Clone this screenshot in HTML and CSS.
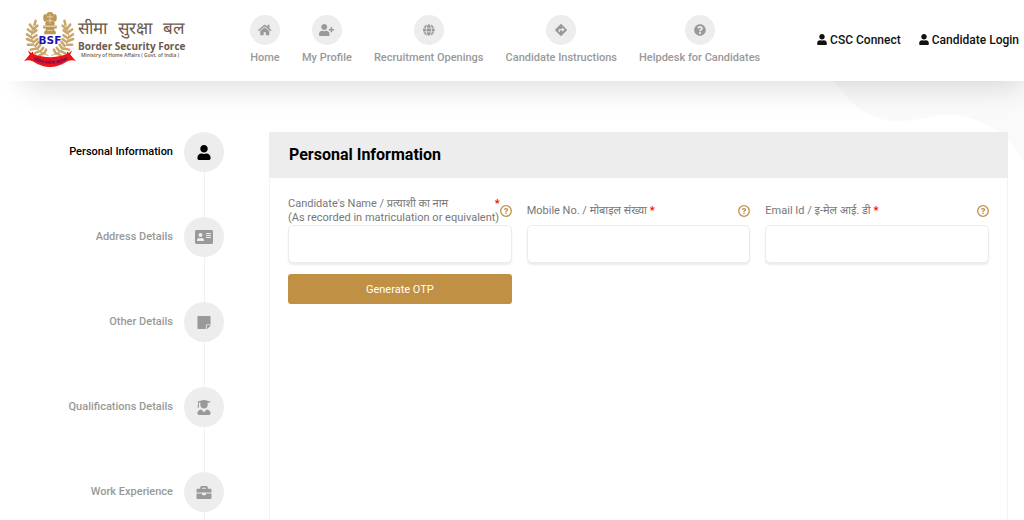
FILE: index.html
```html
<!DOCTYPE html>
<html lang="en">
<head>
    <meta charset="UTF-8">
    <meta name="viewport" content="width=device-width, initial-scale=1.0">
    <title>BSF Recruitment - Personal Information</title>
    <link rel="stylesheet" href="styles.css">
</head>
<body>
    <!-- shared icons -->
    <svg class="sprite" aria-hidden="true">
        <symbol id="user" viewBox="0 0 448 512"><path d="M224 256c70.7 0 128-57.3 128-128S294.7 0 224 0 96 57.3 96 128s57.3 128 128 128zm89.6 32h-16.7c-22.2 10.2-46.9 16-72.9 16s-50.6-5.8-72.9-16h-16.7C60.2 288 0 348.2 0 422.4V464c0 26.5 21.5 48 48 48h352c26.5 0 48-21.5 48-48v-41.6c0-74.2-60.2-134.4-134.4-134.4z"/></symbol>
        <symbol id="help" viewBox="0 0 512 512">
            <circle cx="256" cy="256" r="226" fill="none" stroke="currentColor" stroke-width="56"/>
            <path transform="translate(56 56) scale(.78)" d="M262.7 90c-54.5 0-89.3 23-116.6 63.8-3.5 5.2-2.3 12.4 2.7 16.2l34.7 26.3c5.2 4 12.6 3 16.7-2.1 17.8-22.7 30.1-35.8 57.3-35.8 20.4 0 45.7 13.1 45.7 33 0 15-12.4 22.6-32.5 33.9C247.1 238.5 216 254.9 216 296v4c0 6.6 5.4 12 12 12h56c6.6 0 12-5.4 12-12v-1.3c0-28.5 83.2-29.7 83.2-106.7 0-58-60.2-102-116.5-102zM256 338c-25.4 0-46 20.6-46 46s20.6 46 46 46 46-20.6 46-46-20.6-46-46-46z"/>
        </symbol>
    </svg>

    <header class="header">
        <a class="logo" href="#">
            <svg class="crest" viewBox="0 0 54 58" aria-hidden="true">
                <g id="branch" fill="none" stroke="#c8a66c" stroke-linecap="round">
                    <path stroke-width="1" d="M11 13C4 25 8 39 25 45"/>
                    <path stroke-width="2.6" d="M11 13L12 9M9 17L6 13M10 18L14 14M8 21L4 18M9 22L13 19M7 26L3 23M9 27L13 24M8 30L3 28M10 31L14 28M9 34L4 34M12 35L15 31M12 38L7 39M14 38L17 34M15 41L11 43M17 41L20 37M20 43L16 45M21 43L23 39"/>
                </g>
                <use href="#branch" transform="translate(54 0) scale(-1 1)"/>
                <g fill="#bd9654">
                    <path d="M23 4q0-4 4-4t4 4v6q2 2 0 4h-8q-2-2 0-4z"/>
                    <path d="M20 5q0-3 3-3v8q-3 0-3-3zM34 5q0-3-3-3v8q3 0 3-3z"/>
                    <path d="M20 14h14v3H20zM23 17h8l1 3H22zM21 20h12v3H21z"/>
                </g>
                <path d="M24 5h6M24 9h6M27 2v10M21 15h12M24 19h6" stroke="#eedfbd" stroke-width=".8"/>
                <path fill="#c40b10" d="M9 41l-5 6 7 3zM45 41l5 6-7 3z"/>
                <path fill="#ec1418" d="M4 40Q10 45 18 46Q27 48 36 46Q44 45 50 40L48 44L54 51Q50 49 45 51Q36 57 27 57T9 51Q4 49 0 51L6 44z"/>
                <path id="motto" fill="none" d="M8 49Q16 54 27 54T46 49"/>
                <text class="crest-name" x="27" y="33" text-anchor="middle">BSF</text>
                <text class="crest-motto"><textPath href="#motto" startOffset="50%" text-anchor="middle">जीवन पर्यन्त कर्तव्य</textPath></text>
            </svg>
            <span class="logo-text">
                <span class="logo-hindi" lang="hi"><span>सीमा</span> <span>सुरक्षा</span> <span>बल</span></span>
                <span class="logo-name">Border Security Force</span>
                <span class="logo-ministry">Ministry of Home Affairs ( Govt. of India )</span>
            </span>
        </a>

        <nav class="nav">
            <a href="#">
                <span class="nav-icon"><svg viewBox="0 0 576 512"><path d="M280.37 148.26L96 300.11V464a16 16 0 0 0 16 16l112.06-.29a16 16 0 0 0 15.92-16V368a16 16 0 0 1 16-16h64a16 16 0 0 1 16 16v95.64a16 16 0 0 0 16 16.05L464 480a16 16 0 0 0 16-16V300L295.67 148.26a12.19 12.19 0 0 0-15.3 0zM571.6 251.47L488 182.56V44.05a12 12 0 0 0-12-12h-56a12 12 0 0 0-12 12v72.61L318.47 43a48 48 0 0 0-61 0L4.34 251.47a12 12 0 0 0-1.6 16.9l25.5 31A12 12 0 0 0 45.15 301l235.22-193.74a12.19 12.19 0 0 1 15.3 0L530.9 301a12 12 0 0 0 16.9-1.6l25.5-31a12 12 0 0 0-1.7-16.93z"/></svg></span>
                Home
            </a>
            <a href="#">
                <span class="nav-icon"><svg viewBox="0 0 640 512"><path d="M624 208h-64v-64c0-8.8-7.2-16-16-16h-32c-8.8 0-16 7.2-16 16v64h-64c-8.8 0-16 7.2-16 16v32c0 8.8 7.2 16 16 16h64v64c0 8.8 7.2 16 16 16h32c8.8 0 16-7.2 16-16v-64h64c8.8 0 16-7.2 16-16v-32c0-8.8-7.2-16-16-16zm-400 48c70.7 0 128-57.3 128-128S294.7 0 224 0 96 57.3 96 128s57.3 128 128 128zm89.6 32h-16.7c-22.2 10.2-46.9 16-72.9 16s-50.6-5.8-72.9-16h-16.7C60.2 288 0 348.2 0 422.4V464c0 26.5 21.5 48 48 48h352c26.5 0 48-21.5 48-48v-41.6c0-74.2-60.2-134.4-134.4-134.4z"/></svg></span>
                My Profile
            </a>
            <a href="#">
                <span class="nav-icon"><svg viewBox="0 0 496 512"><path d="M336.5 160C322 70.7 287.8 8 248 8s-74 62.7-88.5 152h177zM152 256c0 22.2 1.2 43.5 3.3 64h185.3c2.1-20.5 3.3-41.8 3.3-64s-1.2-43.5-3.3-64H155.3c-2.1 20.5-3.3 41.8-3.3 64zm324.7-96c-28.6-67.9-86.5-120.4-158-141.6 24.4 33.8 41.2 84.7 50 141.6h108zM177.2 18.4C105.8 39.6 47.8 92.1 19.3 160h108c8.7-56.9 25.5-107.8 49.9-141.6zM487.4 192H372.7c2.1 21 3.3 42.5 3.3 64s-1.2 43-3.3 64h114.6c5.5-20.5 8.6-41.8 8.6-64s-3.1-43.5-8.5-64zM120 256c0-21.5 1.2-43 3.3-64H8.6C3.2 212.5 0 233.8 0 256s3.2 43.5 8.6 64h114.6c-2-21-3.2-42.5-3.2-64zm39.5 96c14.5 89.3 48.7 152 88.5 152s74-62.7 88.5-152h-177zm159.3 141.6c71.4-21.2 129.4-73.7 158-141.6h-108c-8.8 56.9-25.6 107.8-50 141.6zM19.3 352c28.6 67.9 86.5 120.4 158 141.6-24.4-33.8-41.2-84.7-50-141.6h-108z"/></svg></span>
                Recruitment Openings
            </a>
            <a href="#">
                <span class="nav-icon"><svg viewBox="0 0 512 512"><path d="M502.61 233.32L278.68 9.39c-12.52-12.52-32.83-12.52-45.36 0L9.39 233.32c-12.52 12.53-12.52 32.83 0 45.36l223.93 223.93c12.52 12.53 32.83 12.53 45.36 0l223.93-223.93c12.52-12.53 12.52-32.83 0-45.36zm-100.98 12.56l-84.21 77.73c-5.12 4.73-13.43 1.1-13.43-5.88V264h-96v64c0 4.42-3.58 8-8 8h-32c-4.42 0-8-3.58-8-8v-80c0-17.67 14.33-32 32-32h112v-53.73c0-6.97 8.3-10.61 13.43-5.88l84.21 77.73c3.43 3.17 3.43 8.59 0 11.76z"/></svg></span>
                Candidate Instructions
            </a>
            <a href="#">
                <span class="nav-icon"><svg viewBox="0 0 512 512"><path d="M504 256c0 137-111 248-248 248S8 393 8 256C8 119 119 8 256 8s248 111 248 248zM262.7 90c-54.5 0-89.3 23-116.6 63.8-3.5 5.2-2.3 12.4 2.7 16.2l34.7 26.3c5.2 4 12.6 3 16.7-2.1 17.8-22.7 30.1-35.8 57.3-35.8 20.4 0 45.7 13.1 45.7 33 0 15-12.4 22.6-32.5 33.9C247.1 238.5 216 254.9 216 296v4c0 6.6 5.4 12 12 12h56c6.6 0 12-5.4 12-12v-1.3c0-28.5 83.2-29.7 83.2-106.7 0-58-60.2-102-116.5-102zM256 338c-25.4 0-46 20.6-46 46s20.6 46 46 46 46-20.6 46-46-20.6-46-46-46z" fill-rule="evenodd"/></svg></span>
                Helpdesk for Candidates
            </a>
        </nav>

        <div class="account">
            <a href="#"><svg><use href="#user"/></svg>CSC Connect</a>
            <a href="#"><svg><use href="#user"/></svg>Candidate Login</a>
        </div>
    </header>

    <main class="main">
        <svg class="wave" viewBox="0 0 190 90" aria-hidden="true"><path d="M0 0C14 20 32 40 64 40C88 40 96 33 118 34C150 36 178 56 190 82V0z"/></svg>

        <ol class="steps">
            <li class="active">
                <a href="#">Personal Information</a>
                <span class="step-icon"><svg><use href="#user"/></svg></span>
            </li>
            <li>
                <a href="#">Address Details</a>
                <span class="step-icon"><svg class="wide" viewBox="0 0 576 512"><path fill-rule="evenodd" d="M528 32H48C22 32 0 54 0 80v352c0 26 22 48 48 48h480c26 0 48-22 48-48V80c0-26-22-48-48-48zM176 128a64 64 0 1 1 0 128a64 64 0 0 1 0-128zM64 364c0-50 34-82 67-76 30 12 60 12 90 0 33-6 67 26 67 76 0 12-9 20-22 20H86c-13 0-22-8-22-20zM352 128h152q8 0 8 8v16q0 8-8 8H352zM352 192h152q8 0 8 8v16q0 8-8 8H352zM352 256h152q8 0 8 8v16q0 8-8 8H352z"/></svg></span>
            </li>
            <li>
                <a href="#">Other Details</a>
                <span class="step-icon"><svg viewBox="0 0 448 512"><path d="M312 320h136V56c0-13.3-10.7-24-24-24H24C10.7 32 0 42.7 0 56v400c0 13.3 10.7 24 24 24h264V344c0-13.2 10.8-24 24-24zm129 55l-98 98c-4.5 4.5-10.6 7-17 7h-6V352h128v6.1c0 6.3-2.5 12.4-7 16.9z"/></svg></span>
            </li>
            <li>
                <a href="#">Qualifications Details</a>
                <span class="step-icon"><svg viewBox="0 0 448 512"><path d="M319.4 320.6L224 416l-95.4-95.4C57.1 323.7 0 382.2 0 454.4v9.6c0 26.5 21.5 48 48 48h352c26.5 0 48-21.5 48-48v-9.6c0-72.2-57.1-130.7-128.6-133.8zM13.6 79.8l6.4 1.5v58.4c-7 4.2-12 11.5-12 20.3 0 8.4 4.6 15.4 11.1 19.7L3.5 242c-1.7 6.9 2.1 14 7.6 14h41.8c5.5 0 9.3-7.1 7.6-14l-15.6-62.3C51.4 175.4 56 168.4 56 160c0-8.8-5-16.1-12-20.3V87.1l66 15.9c-8.6 17.2-14 36.4-14 57 0 70.7 57.3 128 128 128s128-57.3 128-128c0-20.6-5.3-39.8-14-57l96.3-23.2c18.2-4.4 18.2-27.1 0-31.5l-190.4-46c-13-3.1-26.7-3.1-39.7 0L13.6 48.2c-18.1 4.4-18.1 27.2 0 31.6z"/></svg></span>
            </li>
            <li>
                <a href="#">Work Experience</a>
                <span class="step-icon"><svg viewBox="0 0 512 512"><path d="M320 336c0 8.84-7.16 16-16 16h-96c-8.84 0-16-7.16-16-16v-48H0v144c0 25.6 22.4 48 48 48h416c25.6 0 48-22.4 48-48V288H320v48zm144-208h-80V80c0-25.6-22.4-48-48-48H176c-25.6 0-48 22.4-48 48v48H48c-25.6 0-48 22.4-48 48v80h512v-80c0-25.6-22.4-48-48-48zm-144 0H192V96h128v32z"/></svg></span>
            </li>
        </ol>

        <section class="panel">
            <h1>Personal Information</h1>
            <form class="form">
                <div class="field">
                    <div class="field-head">
                        <label for="name">
                            <span class="first-line"><span>Candidate's Name / <span lang="hi">प्रत्याशी का नाम</span></span> <b>*</b></span>
                            (As recorded in matriculation or equivalent)
                        </label>
                        <button class="help" type="button" aria-label="Help: name"><svg><use href="#help"/></svg></button>
                    </div>
                    <input type="text" id="name" required>
                </div>
                <div class="field">
                    <div class="field-head">
                        <label for="mobile">Mobile No. / <span lang="hi">मोबाइल संख्या</span> <b>*</b></label>
                        <button class="help" type="button" aria-label="Help: mobile"><svg><use href="#help"/></svg></button>
                    </div>
                    <input type="tel" id="mobile" required>
                </div>
                <div class="field">
                    <div class="field-head">
                        <label for="email">Email Id / <span lang="hi">इ-मेल आई. डी</span> <b>*</b></label>
                        <button class="help" type="button" aria-label="Help: email"><svg><use href="#help"/></svg></button>
                    </div>
                    <input type="email" id="email" required>
                </div>
                <button class="otp" type="button">Generate OTP</button>
            </form>
        </section>
    </main>
</body>
</html>
```
FILE: styles.css
```css
* {
    box-sizing: border-box;
}
body {
    font-family: Roboto, "Noto Sans Devanagari", "Noto Sans", sans-serif;
    font-size: 11px;
    display: flex;
    flex-direction: column;
    min-height: 100vh;
    margin: 0;
    background-color: #fff;
    color: #999;
}
a {
    color: inherit;
    text-decoration: none;
}
svg {
    fill: currentColor;
    flex: none;
}
.sprite {
    position: absolute;
    width: 0;
    height: 0;
}

/* header */
.header {
    position: relative;
    z-index: 1;
    display: flex;
    align-items: center;
    min-height: 81px;
    padding: 0 5px 0 24px;
    background-color: #fff;
    box-shadow: 12px 18px 30px -12px rgba(0, 0, 0, 0.14);
}
.logo {
    display: flex;
    width: 226px;
    flex: none;
    padding-bottom: 2px;
    color: #6b5a4e;
}
.crest {
    width: 52px;
    height: 56px;
}
.crest-name {
    font: bold 11px "DejaVu Sans", sans-serif;
    fill: #1c12b4;
}
.crest-motto {
    font-size: 5px;
    font-weight: bold;
    fill: #6a1060;
}
.logo-text {
    display: flex;
    flex-direction: column;
    padding: 4px 0 0 2px;
    font-family: "Open Sans", sans-serif;
    white-space: nowrap;
}
.logo-hindi {
    display: flex;
    justify-content: space-between;
    font-size: 17px;
    line-height: 24px;
}
.logo-name {
    font-size: 10px;
    font-weight: bold;
    line-height: 12px;
}
.logo-ministry {
    padding-left: 3px;
    font-size: 5px;
    font-weight: 600;
    line-height: 7px;
}
.nav {
    display: flex;
    gap: 22px;
    padding-bottom: 2px;
    font-weight: 500;
    white-space: nowrap;
}
.nav a {
    display: flex;
    flex-direction: column;
    align-items: center;
    gap: 6px;
    line-height: 14px;
}
.nav-icon {
    display: flex;
    align-items: center;
    justify-content: center;
    width: 30px;
    height: 30px;
    border-radius: 50%;
    background-color: #ededed;
}
.nav-icon svg {
    height: 12px;
}
.account {
    display: flex;
    gap: 18px;
    margin-left: auto;
    padding-bottom: 2px;
    font-size: 12px;
    font-weight: 500;
    color: #111;
    white-space: nowrap;
}
.account a {
    display: flex;
    align-items: center;
    gap: 3px;
}
.account svg {
    width: 10px;
    height: 11px;
}

/* content */
.main {
    position: relative;
    display: flex;
    flex: 1;
    gap: 45px;
    padding: 51px 16px 0 0;
}
.wave {
    position: absolute;
    top: 0;
    right: 0;
    width: 190px;
    height: 90px;
    fill: #fafafa;
}
.steps {
    display: flex;
    flex-direction: column;
    flex: none;
    width: 224px;
    margin: 0;
    padding: 0;
    list-style: none;
    font-weight: 500;
}
.steps li {
    display: flex;
    justify-content: flex-end;
    gap: 11px;
    height: 85px;
    line-height: 40px;
    background: linear-gradient(#f0f0f0, #f0f0f0) right 19px top / 1px 100% no-repeat;
}
.steps li:last-child {
    height: auto;
    flex: 1;
}
.steps .active {
    color: #000;
}
.step-icon {
    display: flex;
    align-items: center;
    justify-content: center;
    width: 40px;
    height: 40px;
    border-radius: 50%;
    background-color: #ededed;
}
.step-icon svg {
    width: 16px;
    height: 15px;
}
.step-icon .wide {
    width: 18px;
    height: 16px;
}
.panel {
    position: relative;
    flex: 1;
    border: solid #f3f3f3;
    border-width: 0 1px;
    background-color: #fff;
}
h1 {
    margin: 0 -1px;
    padding: 0 20px;
    background-color: #ededed;
    color: #000;
    font-size: 16px;
    font-weight: bold;
    line-height: 46px;
}
.form {
    display: grid;
    grid-template-columns: repeat(3, minmax(0, 1fr));
    gap: 11px 15px;
    padding: 19px 18px;
}
.field-head {
    display: flex;
    align-items: center;
    height: 28px;
    line-height: 14px;
    color: #777;
}
label {
    flex: 1;
    white-space: nowrap;
}
label b {
    color: #f00;
}
.first-line {
    display: flex;
    justify-content: space-between;
    height: 14px;
}
.help {
    display: flex;
    padding: 0;
    border: none;
    background: none;
    color: #c09045;
    cursor: pointer;
}
.help svg {
    width: 12px;
    height: 12px;
}
input {
    display: block;
    width: 100%;
    height: 38px;
    padding: 0 10px;
    border: 1px solid #ececec;
    border-radius: 5px;
    background-color: #fff;
    box-shadow: 0 2px 2px rgba(0, 0, 0, 0.08);
    font: inherit;
}
.otp {
    height: 30px;
    border: none;
    border-radius: 3px;
    background-color: #c09045;
    color: #fff;
    font: inherit;
    cursor: pointer;
}
.otp:hover {
    background-color: #ab7f3a;
}
```
